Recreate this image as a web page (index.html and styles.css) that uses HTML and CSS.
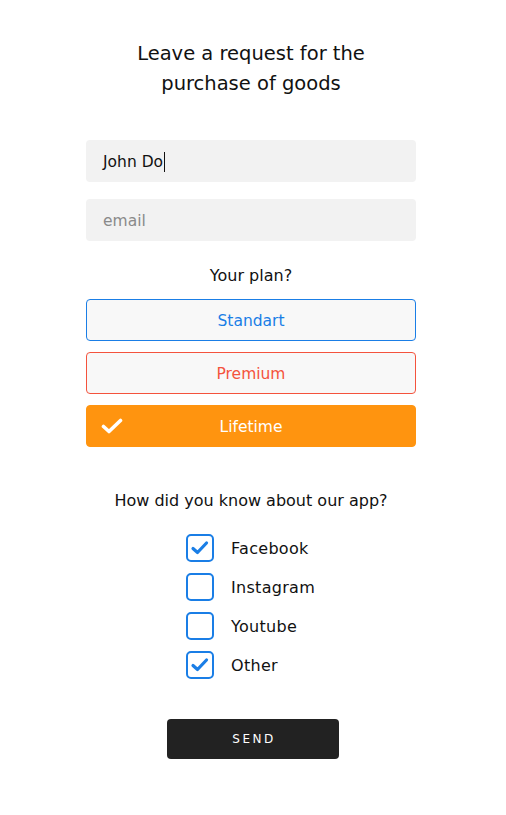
FILE: index.html
```html
<!DOCTYPE html>
<html lang="en">
<head>
<meta charset="utf-8">
<title>Request</title>
<link rel="stylesheet" href="styles.css">
</head>
<body>
<form class="form">
  <h1 class="title">Leave a request for the<br>purchase of goods</h1>
  <div class="fields">
    <div class="field"><span class="value">John Do</span><span class="caret"></span></div>
    <div class="field placeholder">email</div>
  </div>
  <p class="label plan-label">Your plan?</p>
  <div class="plans">
    <div class="plan plan-standart">Standart</div>
    <div class="plan plan-premium">Premium</div>
    <div class="plan plan-lifetime">
      <svg class="plan-check" width="22" height="16" viewBox="0 0 22 16"><path d="M2.5 8.5 L8 13.5 L19.5 2.5" fill="none" stroke="#fff" stroke-width="3.6" stroke-linecap="round" stroke-linejoin="round"/></svg>
      Lifetime
    </div>
  </div>
  <p class="label source-label">How did you know about our app?</p>
  <div class="sources">
    <div class="source"><span class="box"><svg width="20" height="16" viewBox="0 0 20 16"><path d="M3 8.5 L7.5 12.5 L16.5 3" fill="none" stroke="#1a7ee6" stroke-width="3.2" stroke-linecap="round" stroke-linejoin="round"/></svg></span><span class="source-name">Facebook</span></div>
    <div class="source"><span class="box"></span><span class="source-name">Instagram</span></div>
    <div class="source"><span class="box"></span><span class="source-name">Youtube</span></div>
    <div class="source"><span class="box"><svg width="20" height="16" viewBox="0 0 20 16"><path d="M3 8.5 L7.5 12.5 L16.5 3" fill="none" stroke="#1a7ee6" stroke-width="3.2" stroke-linecap="round" stroke-linejoin="round"/></svg></span><span class="source-name">Other</span></div>
  </div>
  <div class="actions"><button type="button" class="send">SEND</button></div>
</form>
</body>
</html>
```

FILE: styles.css
```css
* { box-sizing: border-box; }
html, body { margin: 0; padding: 0; background: #fff; }
body {
  font-family: "DejaVu Sans", "Open Sans", sans-serif;
  color: #111;
  padding: 39px 4px 40px 0;
}
.form {
  width: 330px;
  margin: 0 auto;
  display: flex;
  flex-direction: column;
}
.title {
  margin: 0;
  font-size: 19.5px;
  font-weight: 400;
  line-height: 30px;
  text-align: center;
  color: #111;
}
.fields {
  margin-top: 41px;
  display: flex;
  flex-direction: column;
  gap: 17px;
}
.field {
  height: 42px;
  background: #f2f2f2;
  border-radius: 4px;
  padding: 1px 17px 0;
  display: flex;
  align-items: center;
  font-size: 15.5px;
  color: #111;
}
.field.placeholder { color: #8a8a8a; }
.caret {
  display: inline-block;
  width: 1px;
  height: 20px;
  background: #111;
  margin-left: 1px;
}
.label {
  margin: 0;
  text-align: center;
  font-size: 16px;
  line-height: 24px;
  padding-top: 1px;
}
.plan-label { margin-top: 22px; }
.plans {
  margin-top: 11px;
  display: flex;
  flex-direction: column;
  gap: 11px;
}
.plan {
  position: relative;
  height: 42px;
  border-radius: 4px;
  display: flex;
  align-items: center;
  justify-content: center;
  font-size: 15.5px;
  padding-top: 1px;
  background: #f8f8f8;
  border: 1px solid transparent;
}
.plan-standart { border-color: #1a7ee6; color: #1a7ee6; }
.plan-premium { border-color: #f4533d; color: #f4533d; }
.plan-lifetime { background: #ff940f; border-color: #ff940f; color: #fff; }
.plan-check { position: absolute; left: 14px; top: 12px; }
.source-label { margin-top: 41px; }
.sources {
  margin-top: 21px;
  display: flex;
  flex-direction: column;
  gap: 11px;
  padding-left: 100px;
}
.source {
  display: flex;
  align-items: center;
  gap: 17px;
  height: 28px;
  font-size: 16px;
  letter-spacing: 0.3px;
}
.source-name { padding-top: 1px; }
.box {
  width: 28px;
  height: 28px;
  border: 2px solid #1a7ee6;
  border-radius: 5px;
  display: flex;
  align-items: center;
  justify-content: center;
}
.actions {
  margin-top: 40px;
  display: flex;
  justify-content: center;
  padding-left: 4px;
}
.send {
  width: 172px;
  height: 40px;
  border: none;
  border-radius: 4px;
  background: #222;
  color: #fff;
  font-family: inherit;
  font-size: 12px;
  letter-spacing: 2.5px;
  padding: 0 0 0 2px;
}
```
